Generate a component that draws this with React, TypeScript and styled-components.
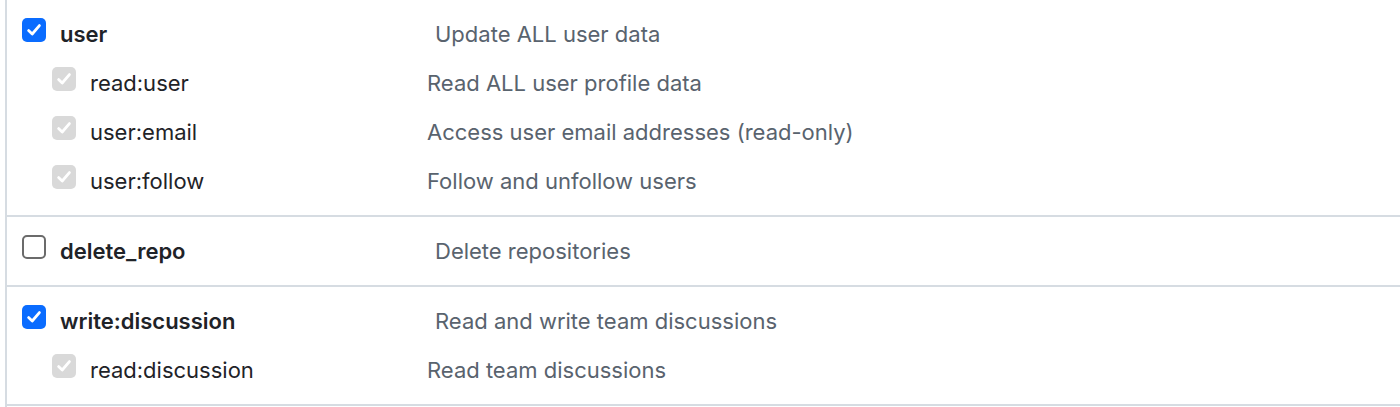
import React from 'react';
import styled, { createGlobalStyle } from 'styled-components';

const GlobalStyle = createGlobalStyle`
  body {
    margin: 0;
    background: #ffffff;
    font-family: Inter, "Noto Sans", "Liberation Sans", sans-serif;
  }
`;

const ScopeList = styled.div`
  width: 1400px;
  height: 407px;
  overflow: hidden;
  box-sizing: border-box;
  margin-left: 5px;
  border-left: 2px solid #d6dce2;
`;

const Section = styled.div`
  display: flex;
  flex-direction: column;
  gap: 7px;
  padding: 13px 0;
  border-bottom: 2px solid #d6dce2;
`;

const Row = styled.div<{ $indent: number; $labelWidth: number }>`
  display: grid;
  grid-template-columns: ${(p) => p.$labelWidth}px 1fr;
  align-items: center;
  height: 42px;
  padding-left: ${(p) => p.$indent}px;
`;

const LabelCell = styled.div`
  display: flex;
  align-items: center;
  gap: 14px;
`;

const Box = styled.span<{ $variant: 'on' | 'off' | 'inherited' }>`
  display: inline-flex;
  align-items: center;
  justify-content: center;
  width: 24px;
  height: 24px;
  margin-bottom: 8px;
  box-sizing: border-box;
  border-radius: 5px;
  flex-shrink: 0;
  background: ${(p) =>
    p.$variant === 'on' ? '#0a6cff' : p.$variant === 'inherited' ? '#d9d9d9' : '#ffffff'};
  border: ${(p) => (p.$variant === 'off' ? '2px solid #6b6b6b' : 'none')};
`;

const ScopeName = styled.span<{ $main: boolean }>`
  font-size: 22px;
  line-height: 28px;
  font-weight: ${(p) => (p.$main ? 600 : 400)};
  color: #1f2328;
`;

const Description = styled.span`
  font-size: 22px;
  line-height: 28px;
  color: #59636e;
`;

const Check = () => (
  <svg width="16" height="16" viewBox="0 0 16 16" fill="none">
    <path d="M2.6 8.6 L6.2 12 L13.4 3.6" stroke="#ffffff" strokeWidth="2.8" strokeLinecap="round" strokeLinejoin="round" />
  </svg>
);

type Scope = {
  name: string;
  description: string;
  checked: boolean;
  children?: Array<{ name: string; description: string }>;
};

const scopes: Scope[] = [
  {
    name: 'user',
    description: 'Update ALL user data',
    checked: true,
    children: [
      { name: 'read:user', description: 'Read ALL user profile data' },
      { name: 'user:email', description: 'Access user email addresses (read-only)' },
      { name: 'user:follow', description: 'Follow and unfollow users' },
    ],
  },
  { name: 'delete_repo', description: 'Delete repositories', checked: false },
  {
    name: 'write:discussion',
    description: 'Read and write team discussions',
    checked: true,
    children: [{ name: 'read:discussion', description: 'Read team discussions' }],
  },
];

export default function App() {
  return (
    <>
      <GlobalStyle />
      <ScopeList>
        {scopes.map((scope) => (
          <Section key={scope.name}>
            <Row $indent={15} $labelWidth={413}>
              <LabelCell>
                <Box $variant={scope.checked ? 'on' : 'off'}>{scope.checked && <Check />}</Box>
                <ScopeName $main>{scope.name}</ScopeName>
              </LabelCell>
              <Description>{scope.description}</Description>
            </Row>
            {scope.children?.map((child) => (
              <Row key={child.name} $indent={45} $labelWidth={375}>
                <LabelCell>
                  <Box $variant="inherited">
                    <Check />
                  </Box>
                  <ScopeName $main={false}>{child.name}</ScopeName>
                </LabelCell>
                <Description>{child.description}</Description>
              </Row>
            ))}
          </Section>
        ))}
      </ScopeList>
    </>
  );
}
